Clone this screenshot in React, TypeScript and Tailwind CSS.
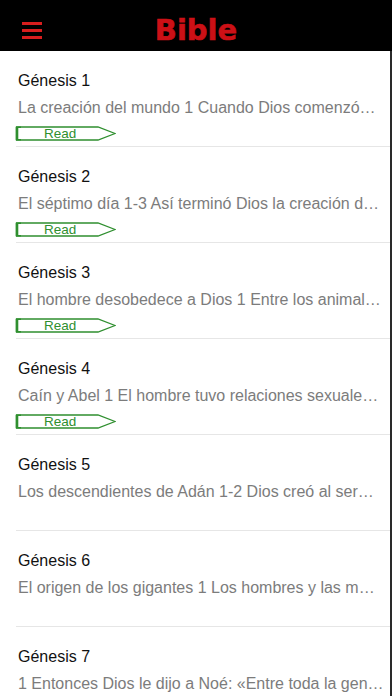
const chapters = [
  { title: "Génesis 1", text: "La creación del mundo 1 Cuando Dios comenzó…", read: true },
  { title: "Génesis 2", text: "El séptimo día 1-3 Así terminó Dios la creación d…", read: true },
  { title: "Génesis 3", text: "El hombre desobedece a Dios 1 Entre los animal…", read: true },
  { title: "Génesis 4", text: "Caín y Abel 1 El hombre tuvo relaciones sexuale…", read: true },
  { title: "Génesis 5", text: "Los descendientes de Adán 1-2 Dios creó al ser…", read: false },
  { title: "Génesis 6", text: "El origen de los gigantes 1 Los hombres y las m…", read: false },
  { title: "Génesis 7", text: "1 Entonces Dios le dijo a Noé: «Entre toda la gen…", read: false },
];

function ReadButton() {
  return (
    <div className="relative mt-[8px] h-[15px] w-[101px]">
      <svg width="101" height="15" viewBox="0 0 101 15" className="absolute left-0 top-0">
        <path
          d="M1.5 1 L83 1 L100 7.5 L83 14 L1.5 14 Z"
          fill="none"
          stroke="#2f8f2f"
          strokeWidth="1.3"
          strokeLinejoin="miter"
        />
        <path d="M2 1 L2 14" stroke="#2f8f2f" strokeWidth="2.6" />
        <path d="M1 1.2 L6 1.2 M1 13.8 L6 13.8" stroke="#2f8f2f" strokeWidth="1.6" />
      </svg>
      <span className="absolute left-[29px] top-0 text-[13.5px] leading-[15px] text-[#2f8f2f] [font-family:'Liberation_Sans',Arial,sans-serif]">
        Read
      </span>
    </div>
  );
}

export default function App() {
  return (
    <div className="h-[696px] w-[392px] overflow-hidden bg-white [font-family:'Liberation_Sans',Arial,sans-serif]">
      {/* Header */}
      <header className="relative flex h-[51px] items-center justify-center bg-black">
        <div className="absolute left-[22px] top-[22px] flex w-[20px] flex-col gap-[4.5px]">
          <span className="h-[2.5px] w-full bg-[#d81e1e]" />
          <span className="h-[2.5px] w-full bg-[#d81e1e]" />
          <span className="h-[2.5px] w-full bg-[#d81e1e]" />
        </div>
        <h1 className="mt-[10px] text-[29px] font-bold leading-none text-[#cc1016] [-webkit-text-stroke:0.6px_#cc1016] [font-family:'DejaVu_Sans',Verdana,sans-serif]">
          Bible
        </h1>
      </header>

      {/* List */}
      <div className="h-[645px] border-r-2 border-[#2a2a2a]">
        {chapters.map((c) => (
          <div key={c.title} className="ml-[16px] h-[96px] border-b border-[#e6e6e6] pr-[6px] pt-[20px]">
            <p className="ml-[2px] text-[16px] leading-[20px] text-[#111]">{c.title}</p>
            <p className="ml-[2px] mt-[7px] whitespace-nowrap text-[16px] leading-[20px] text-[#7c7c7c]">{c.text}</p>
            {c.read && <div className="-ml-[1px]"><ReadButton /></div>}
          </div>
        ))}
      </div>
    </div>
  );
}
